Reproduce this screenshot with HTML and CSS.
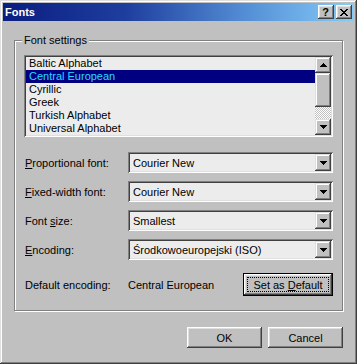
FILE: index.html
```html
<!DOCTYPE html>
<html lang="en">
<head>
    <meta charset="UTF-8">
    <meta name="viewport" content="width=device-width, initial-scale=1.0">
    <title>Fonts</title>
    <link rel="stylesheet" href="styles.css">
</head>
<body>
    <div class="window">
        <div class="titlebar">
            <span class="title">Fonts</span>
            <div class="caption-buttons">
                <div class="caption-btn help">?</div>
                <div class="caption-btn">
                    <svg width="8" height="7" viewBox="0 0 8 7"><path d="M0 0h2v1h-2zM6 0h2v1h-2zM1 1h2v1h-2zM5 1h2v1h-2zM2 2h4v1h-4zM3 3h2v1h-2zM2 4h4v1h-4zM1 5h2v1h-2zM5 5h2v1h-2zM0 6h2v1h-2zM6 6h2v1h-2z" fill="#000"/></svg>
                </div>
            </div>
        </div>

        <div class="dialog-body">
            <div class="group">
                <div class="group-title">Font settings</div>

                <div class="listbox">
                    <ul class="list-items">
                        <li>Baltic Alphabet</li>
                        <li class="selected">Central European</li>
                        <li>Cyrillic</li>
                        <li>Greek</li>
                        <li>Turkish Alphabet</li>
                        <li>Universal Alphabet</li>
                    </ul>
                    <div class="scrollbar">
                        <div class="scroll-btn">
                            <svg width="7" height="4" viewBox="0 0 7 4"><path d="M3 0h1v1h-1zM2 1h3v1h-3zM1 2h5v1h-5zM0 3h7v1h-7z" fill="#000"/></svg>
                        </div>
                        <div class="scroll-thumb"></div>
                        <div class="scroll-track"></div>
                        <div class="scroll-btn">
                            <svg width="7" height="4" viewBox="0 0 7 4"><path d="M0 0h7v1h-7zM1 1h5v1h-5zM2 2h3v1h-3zM3 3h1v1h-1z" fill="#000"/></svg>
                        </div>
                    </div>
                </div>

                <div class="settings">
                    <span class="field-label"><u>P</u>roportional font:</span>
                    <div class="combo">
                        <span class="combo-text">Courier New</span>
                        <span class="combo-btn"><svg width="7" height="4" viewBox="0 0 7 4"><path d="M0 0h7v1h-7zM1 1h5v1h-5zM2 2h3v1h-3zM3 3h1v1h-1z" fill="#000"/></svg></span>
                    </div>

                    <span class="field-label"><u>F</u>ixed-width font:</span>
                    <div class="combo">
                        <span class="combo-text">Courier New</span>
                        <span class="combo-btn"><svg width="7" height="4" viewBox="0 0 7 4"><path d="M0 0h7v1h-7zM1 1h5v1h-5zM2 2h3v1h-3zM3 3h1v1h-1z" fill="#000"/></svg></span>
                    </div>

                    <span class="field-label">Font <u>s</u>ize:</span>
                    <div class="combo">
                        <span class="combo-text">Smallest</span>
                        <span class="combo-btn"><svg width="7" height="4" viewBox="0 0 7 4"><path d="M0 0h7v1h-7zM1 1h5v1h-5zM2 2h3v1h-3zM3 3h1v1h-1z" fill="#000"/></svg></span>
                    </div>

                    <span class="field-label"><u>E</u>ncoding:</span>
                    <div class="combo">
                        <span class="combo-text">Środkowoeuropejski (ISO)</span>
                        <span class="combo-btn"><svg width="7" height="4" viewBox="0 0 7 4"><path d="M0 0h7v1h-7zM1 1h5v1h-5zM2 2h3v1h-3zM3 3h1v1h-1z" fill="#000"/></svg></span>
                    </div>
                </div>

                <div class="default-row">
                    <span class="field-label">Default encoding:</span>
                    <div class="default-value">
                        <span>Central European</span>
                        <div class="btn default-btn"><div class="focus"><span>Set as <u>D</u>efault</span></div></div>
                    </div>
                </div>
            </div>

            <div class="actions">
                <div class="btn">OK</div>
                <div class="btn">Cancel</div>
            </div>
        </div>
    </div>
</body>
</html>
```

FILE: styles.css
```css
body {
    margin: 0;
    padding: 0;
    background-color: #c0c0c0;
    font-family: "Liberation Sans", Arial, sans-serif;
    font-size: 11px;
    color: #000;
}

u {
    text-decoration-thickness: 1px;
    text-underline-offset: 1px;
}

.window {
    width: 357px;
    height: 364px;
    box-sizing: border-box;
    padding: 3px;
    background-color: #c0c0c0;
    box-shadow: inset -1px -1px 0 #404040, inset 1px 1px 0 #dfdfdf,
                inset -2px -2px 0 #808080, inset 2px 2px 0 #fff;
}

/* title bar */
.titlebar {
    height: 18px;
    display: flex;
    align-items: center;
    justify-content: space-between;
    padding: 0 2px 0 2px;
    background: linear-gradient(to right, #0a1e80, #1e3e9e 35%, #5590d6 70%, #86ccf8);
}

.title {
    color: #fff;
    font-weight: bold;
    font-size: 11px;
    line-height: 13px;
}

.caption-buttons {
    display: flex;
    gap: 2px;
}

.caption-btn {
    width: 16px;
    height: 14px;
    box-sizing: border-box;
    display: flex;
    align-items: center;
    justify-content: center;
    background-color: #c0c0c0;
    box-shadow: inset -1px -1px 0 #404040, inset 1px 1px 0 #fff,
                inset -2px -2px 0 #808080, inset 2px 2px 0 #dfdfdf;
}

.caption-btn.help {
    font-weight: bold;
    font-size: 11px;
    line-height: 14px;
    padding-right: 1px;
}

/* dialog contents */
.dialog-body {
    padding: 19px 11px 0 11px;
}

.group {
    border: 1px solid #808080;
    box-shadow: 1px 1px 0 #fff, inset 1px 1px 0 #fff;
    padding: 0 9px 14px 9px;
}

.group-title {
    width: fit-content;
    margin: -7px 0 0 -2px;
    padding: 0 2px;
    line-height: 13px;
    background-color: #c0c0c0;
}

.listbox {
    margin-top: 8px;
    height: 82px;
    box-sizing: border-box;
    padding: 2px;
    display: flex;
    background-color: #ececec;
    box-shadow: inset 1px 1px 0 #808080, inset -1px -1px 0 #fff,
                inset 2px 2px 0 #404040, inset -2px -2px 0 #dfdfdf;
}

.list-items {
    flex: 1;
    list-style: none;
    margin: 0;
    padding: 0;
}

.list-items li {
    height: 13px;
    line-height: 13px;
    padding-left: 3px;
    white-space: nowrap;
}

.list-items li.selected {
    background-color: #000080;
    color: #2ad8ff;
}

.scrollbar {
    width: 16px;
    display: flex;
    flex-direction: column;
}

.scroll-btn,
.scroll-thumb,
.combo-btn {
    background-color: #c0c0c0;
    box-shadow: inset -1px -1px 0 #404040, inset 1px 1px 0 #dfdfdf,
                inset -2px -2px 0 #808080, inset 2px 2px 0 #fff;
}

.scroll-btn {
    height: 16px;
    display: flex;
    align-items: center;
    justify-content: center;
}

.scroll-thumb {
    height: 34px;
}

.scroll-track {
    flex: 1;
    background: repeating-conic-gradient(#fff 0 25%, #c0c0c0 0 50%) 0 0 / 2px 2px;
}

.settings {
    margin-top: 15px;
    display: grid;
    grid-template-columns: 104px 1fr;
    grid-auto-rows: 21px;
    row-gap: 8px;
    align-items: center;
}

.field-label {
    padding-left: 1px;
    white-space: nowrap;
}

.combo {
    height: 21px;
    box-sizing: border-box;
    padding: 2px;
    display: flex;
    align-items: center;
    background-color: #ececec;
    box-shadow: inset 1px 1px 0 #808080, inset -1px -1px 0 #fff,
                inset 2px 2px 0 #404040, inset -2px -2px 0 #dfdfdf;
}

.combo-text {
    flex: 1;
    padding-left: 3px;
    white-space: nowrap;
}

.combo-btn {
    width: 16px;
    height: 17px;
    display: flex;
    align-items: center;
    justify-content: center;
}

.default-row {
    margin-top: 13px;
    display: grid;
    grid-template-columns: 104px 1fr;
    align-items: center;
}

.default-value {
    display: flex;
    align-items: center;
    justify-content: space-between;
}

/* push buttons */
.btn {
    width: 75px;
    height: 21px;
    box-sizing: border-box;
    display: flex;
    align-items: center;
    justify-content: center;
    background-color: #c0c0c0;
    box-shadow: inset -1px -1px 0 #404040, inset 1px 1px 0 #fff,
                inset -2px -2px 0 #808080, inset 2px 2px 0 #dfdfdf;
}

.default-btn {
    width: 90px;
    height: 23px;
    padding: 3px;
    border: 1px solid #000;
}

.default-btn .focus {
    flex: 1;
    align-self: stretch;
    display: flex;
    align-items: center;
    justify-content: center;
    border: 1px dotted #000;
}

.actions {
    margin-top: 16px;
    display: flex;
    justify-content: flex-end;
    gap: 6px;
}
```
